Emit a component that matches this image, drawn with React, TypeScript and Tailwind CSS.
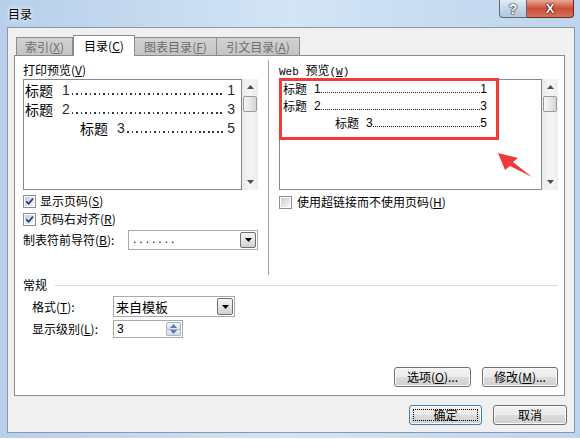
import React from 'react';

// accelerator key, e.g. (V) with underlined letter
function Acc({ k }: { k: string }) {
  return (
    <span>
      (<span className="underline underline-offset-[1px]">{k}</span>)
    </span>
  );
}

function CheckBox({ checked }: { checked?: boolean }) {
  return (
    <span className="flex h-[13px] w-[13px] shrink-0 items-center justify-center border border-[#8e8f8f] bg-white">
      <span className="flex h-[9px] w-[9px] items-center justify-center bg-gradient-to-br from-[#c9cdd3] to-[#f8f8f8]">
        {checked && (
          <svg width="9" height="9" viewBox="0 0 9 9">
            <path d="M1.2 4.3 L3.6 6.8 L8 1.6" fill="none" stroke="#1f3c8f" strokeWidth="1.7" />
          </svg>
        )}
      </span>
    </span>
  );
}

function ArrowUp() {
  return (
    <svg width="7" height="4" viewBox="0 0 7 4">
      <path d="M0 4 L3.5 0 L7 4 Z" fill="#4f4f4f" />
    </svg>
  );
}

function ArrowDown({ color = '#4f4f4f' }: { color?: string }) {
  return (
    <svg width="7" height="4" viewBox="0 0 7 4">
      <path d="M0 0 L3.5 4 L7 0 Z" fill={color} />
    </svg>
  );
}

function VScroll() {
  return (
    <div className="flex h-full w-[16px] shrink-0 flex-col items-center bg-gradient-to-r from-[#e9e9e9] via-[#f5f5f5] to-[#ededed]">
      <div className="flex h-[16px] w-full items-center justify-center">
        <ArrowUp />
      </div>
      <div className="mt-[1px] h-[16px] w-[14px] rounded-[2px] border border-[#9a9a9a] bg-gradient-to-r from-[#f4f4f4] via-[#e8e8e8] to-[#d5d5d5]" />
      <div className="flex-1" />
      <div className="flex h-[16px] w-full items-center justify-center">
        <ArrowDown />
      </div>
    </div>
  );
}

function DropButton() {
  return (
    <span className="m-[1px] flex w-[16px] items-center justify-center rounded-[2px] border border-[#707070] bg-gradient-to-b from-[#f3f3f3] via-[#e6e6e6] to-[#d0d0d0]">
      <ArrowDown color="#000" />
    </span>
  );
}

function Btn({ children, w, primary }: { children: React.ReactNode; w: string; primary?: boolean }) {
  return (
    <div
      className={`relative flex h-[20px] items-center justify-center rounded-[3px] border bg-[linear-gradient(#f2f2f2,#ebebeb_50%,#dddddd_50%,#cfcfcf)] text-[12px] leading-none text-black shadow-[inset_0_0_0_1px_#fbfbfb] ${w} ${
        primary ? 'border-[#3c7fb1] shadow-[inset_0_0_0_1px_#9fd9f6]' : 'border-[#707070]'
      }`}
    >
      {primary && <span className="absolute inset-[3px] border border-dotted border-black" />}
      <span className="relative">{children}</span>
    </div>
  );
}

function PrintRow({ indent, num, page }: { indent: string; num: string; page: string }) {
  return (
    <div className={`flex h-[19px] min-w-0 items-center pr-[6px] ${indent}`}>
      <span className="shrink-0 text-[14px] leading-none">标题</span>
      <span className="ml-[9px] shrink-0 font-['Liberation_Sans',sans-serif] text-[14px] leading-none text-[#2a2a33]">{num}</span>
      <span className="ml-[2px] mr-[2px] mt-[8px] h-[2px] min-w-0 flex-1 bg-[repeating-linear-gradient(90deg,#2b3550_0_1.5px,transparent_1.5px_4.5px)]" />
      <span className="shrink-0 font-['Liberation_Sans',sans-serif] text-[14px] leading-none text-[#2a2a33]">{page}</span>
    </div>
  );
}

function WebRow({ indent, num, page }: { indent: string; num: string; page: string }) {
  return (
    <div className={`flex h-[17px] w-[204px] items-center ${indent}`}>
      <span className="text-[12px] leading-none">标题</span>
      <span className="ml-[7px] font-['Liberation_Sans',sans-serif] text-[12px] leading-none">{num}</span>
      <span className="mt-[8px] h-0 flex-1 border-b border-dotted border-[#222]" />
      <span className="font-['Liberation_Sans',sans-serif] text-[12px] leading-none">{page}</span>
    </div>
  );
}

export default function App() {
  const tabs = [
    { label: '索引', k: 'X', w: 'w-[57px]' },
    { label: '目录', k: 'C', w: 'w-[62px]', active: true },
    { label: '图表目录', k: 'F', w: 'w-[82px]' },
    { label: '引文目录', k: 'A', w: 'w-[83px]' },
  ];

  return (
    <div className="relative flex h-[441px] w-[580px] flex-col overflow-hidden bg-gradient-to-r from-[#b7cfea] via-[#d3e4f5] to-[#bdd5ee] font-['Noto_Sans_CJK_SC',sans-serif] text-[12px] text-black">
      {/* Title bar */}
      <div className="flex h-[27px] shrink-0 items-start">
        <span className="ml-[8px] mt-[6px] text-[12px] leading-[16px] [text-shadow:0_0_6px_#fff,0_0_3px_#fff]">目录</span>
        <div className="flex-1" />
        <div className="mr-[6px] flex">
          <div className="flex h-[18px] w-[28px] items-center justify-center rounded-bl-[4px] border border-t-0 border-[#5a6a80] bg-gradient-to-b from-[#e2ebf5] via-[#c7d6e8] to-[#b3c6de] font-['Liberation_Sans',sans-serif] text-[14px] font-bold leading-none text-white [text-shadow:0_0_1px_#223,0_0_1px_#223,0_0_2px_#223]">
            ?
          </div>
          <div className="flex h-[18px] w-[47px] items-center justify-center rounded-br-[4px] border border-l-0 border-t-0 border-[#6b2a1f] bg-gradient-to-b from-[#e9a898] via-[#cd4c34] to-[#d7725a] font-['Liberation_Sans',sans-serif] text-[13px] font-bold leading-none text-white [text-shadow:0_0_1px_#300,0_0_1px_#300,0_0_2px_#300]">
            X
          </div>
        </div>
      </div>

      {/* Client area */}
      <div className="flex h-[406px] shrink-0 pl-[7px] pr-[5px]">
        <div className="flex flex-1 flex-col border border-[#8b96a6] bg-[#f0f0f0] pl-[6px] pr-[9px] pt-[7px]">
          {/* Tabs */}
          <div className="flex h-[20px] items-end pl-[2px]">
            {tabs.map((t) =>
              t.active ? (
                <div
                  key={t.label}
                  className={`relative z-10 -mb-[1px] flex h-[21px] items-center justify-center border border-b-0 border-[#898c95] bg-white text-[12px] text-black ${t.w}`}
                >
                  {t.label}
                  <Acc k={t.k} />
                </div>
              ) : (
                <div
                  key={t.label}
                  className={`flex h-[18px] items-center justify-center border border-b-0 border-l-0 border-[#8c8c8c] bg-gradient-to-b from-[#d2d2d2] to-[#c4c4c4] text-[12px] text-[#6e6e6e] first:border-l ${t.w}`}
                >
                  {t.label}
                  <Acc k={t.k} />
                </div>
              )
            )}
          </div>

          {/* Tab panel */}
          <div className="flex h-[341px] flex-col border border-[#898c95] bg-white">
            <div className="flex h-[219px] pl-[8px]">
              {/* Left column */}
              <div className="flex w-[235px] shrink-0 flex-col pt-[6px]">
                <div className="h-[16px] leading-[16px]">
                  打印预览<Acc k="V" />
                </div>
                <div className="mt-[1px] flex h-[111px]">
                  <div className="min-w-0 flex-1 overflow-hidden border border-[#828790] bg-white pl-[1px]">
                    <PrintRow indent="" num="1" page="1" />
                    <PrintRow indent="" num="2" page="3" />
                    <PrintRow indent="pl-[55px]" num="3" page="5" />
                  </div>
                  <VScroll />
                </div>
                <div className="mt-[2px] flex h-[18px] items-center">
                  <CheckBox checked />
                  <span className="ml-[4px]">
                    显示页码<Acc k="S" />
                  </span>
                </div>
                <div className="flex h-[18px] items-center">
                  <CheckBox checked />
                  <span className="ml-[4px]">
                    页码右对齐<Acc k="R" />
                  </span>
                </div>
                <div className="mt-[2px] flex h-[20px] items-center">
                  <span className="w-[105px]">
                    制表符前导符<Acc k="B" />:
                  </span>
                  <div className="flex h-[20px] flex-1 border border-[#a7abb0] bg-white">
                    <span className="flex-1 pl-[4px] font-['Liberation_Sans',sans-serif] text-[12px] leading-[16px] tracking-[3px]">
                      .......
                    </span>
                    <DropButton />
                  </div>
                </div>
              </div>

              {/* Separator */}
              <div className="ml-[10px] mt-[4px] w-px bg-[#a0a0a0]" />

              {/* Right column */}
              <div className="ml-[10px] flex w-[279px] shrink-0 flex-col pt-[6px]">
                <div className="h-[16px] font-['Liberation_Mono',monospace] text-[11px] leading-[16px]">
                  Web <span className="font-['Noto_Sans_CJK_SC',sans-serif] text-[12px]">预览</span>
                  <Acc k="W" />
                </div>
                <div className="relative mt-[1px] flex h-[111px]">
                  <div className="min-w-0 flex-1 overflow-hidden border border-[#828790] bg-white pl-[3px]">
                    <WebRow indent="" num="1" page="1" />
                    <WebRow indent="" num="2" page="3" />
                    <WebRow indent="pl-[52px]" num="3" page="5" />
                  </div>
                  <VScroll />
                  <div className="absolute -top-[1px] left-0 h-[62px] w-[220px] border-[3px] border-[#f23a3a]" />
                </div>
                <div className="mt-[3px] flex h-[18px] items-center">
                  <CheckBox />
                  <span className="ml-[5px]">
                    使用超链接而不使用页码<Acc k="H" />
                  </span>
                </div>
              </div>
            </div>

            {/* 常规 group */}
            <div className="mt-[2px] flex h-[16px] items-center pl-[8px] pr-[6px]">
              <span className="leading-[16px]">常规</span>
              <div className="ml-[8px] h-px flex-1 bg-[#d5dfe5]" />
            </div>
            <div className="mt-[3px] flex h-[21px] items-center pl-[17px]">
              <span className="w-[81px]">
                格式<Acc k="T" />:
              </span>
              <div className="flex h-[21px] w-[122px] border border-[#a7abb0] bg-white">
                <span className="flex-1 pl-[2px] text-[13px] leading-[19px]">来自模板</span>
                <DropButton />
              </div>
            </div>
            <div className="mt-[3px] flex h-[18px] items-center pl-[17px]">
              <span className="w-[81px]">
                显示级别<Acc k="L" />:
              </span>
              <div className="flex h-[18px] w-[70px] border border-[#a7abb0] bg-white">
                <span className="flex-1 pl-[3px] font-['Liberation_Sans',sans-serif] text-[12px] leading-[16px]">3</span>
                <div className="m-[1px] flex w-[15px] flex-col">
                  <div className="flex flex-1 items-center justify-center rounded-t-[2px] border border-[#a8b4c4] bg-gradient-to-b from-[#f3f5f8] to-[#dde4ee]">
                    <svg width="7" height="4" viewBox="0 0 7 4">
                      <path d="M0 4 L3.5 0 L7 4 Z" fill="#5b7bb5" />
                    </svg>
                  </div>
                  <div className="flex flex-1 items-center justify-center rounded-b-[2px] border border-t-0 border-[#a8b4c4] bg-gradient-to-b from-[#e8edf3] to-[#d4dce8]">
                    <svg width="7" height="4" viewBox="0 0 7 4">
                      <path d="M0 0 L3.5 4 L7 0 Z" fill="#5b7bb5" />
                    </svg>
                  </div>
                </div>
              </div>
            </div>

            <div className="flex-1" />
            <div className="flex justify-end gap-[11px] pb-[8px] pr-[6px]">
              <Btn w="w-[77px]">
                选项<Acc k="O" />...
              </Btn>
              <Btn w="w-[76px]">
                修改<Acc k="M" />...
              </Btn>
            </div>
          </div>

          {/* Bottom buttons */}
          <div className="-mr-[2px] mt-[9px] flex justify-end gap-[11px]">
            <Btn w="w-[73px]" primary>
              确定
            </Btn>
            <Btn w="w-[74px]">取消</Btn>
          </div>
        </div>
      </div>

      {/* bottom frame edge */}
      <div className="h-[5px] shrink-0" />
      <div className="flex-1 bg-white" />

      {/* red annotation arrow */}
      <svg className="absolute left-[495px] top-[148px]" width="42" height="34" viewBox="0 0 42 34">
        <polygon points="3,5 23,10 17.9,14 37,29 15.1,18 10,22" fill="#f03a3a" />
      </svg>
    </div>
  );
}
